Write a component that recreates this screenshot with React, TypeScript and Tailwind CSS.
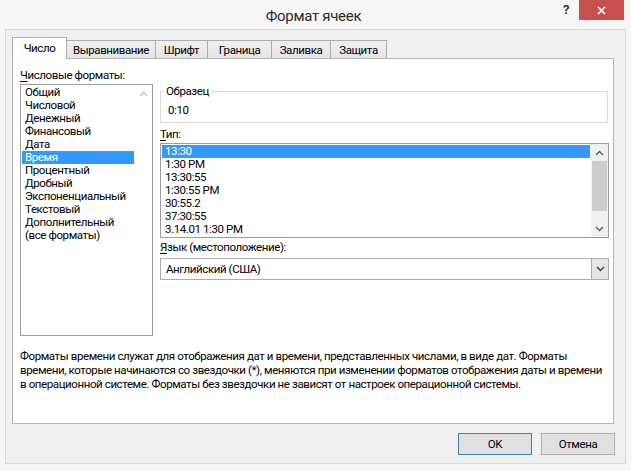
const categories = [
  'Общий',
  'Числовой',
  'Денежный',
  'Финансовый',
  'Дата',
  'Время',
  'Процентный',
  'Дробный',
  'Экспоненциальный',
  'Текстовый',
  'Дополнительный',
  '(все форматы)',
];

const types = ['13:30', '1:30 PM', '13:30:55', '1:30:55 PM', '30:55.2', '37:30:55', '3.14.01 1:30 PM'];

const tabs = [
  { label: 'Выравнивание', w: 'w-[90px]' },
  { label: 'Шрифт', w: 'w-[53px]' },
  { label: 'Граница', w: 'w-[65px]' },
  { label: 'Заливка', w: 'w-[60px]' },
  { label: 'Защита', w: 'w-[57px]' },
];

function Chevron({ up, className }: { up?: boolean; className?: string }) {
  return (
    <svg width="9" height="6" viewBox="0 0 9 6" className={className}>
      <path
        d={up ? 'M1 5 L4.5 1.5 L8 5' : 'M1 1 L4.5 4.5 L8 1'}
        fill="none"
        stroke="currentColor"
        strokeWidth="1.5"
      />
    </svg>
  );
}

export default function App() {
  return (
    <div className="w-[631px] h-[471px] overflow-hidden bg-[#f6f6f6] font-['Roboto',sans-serif] text-[11.5px] tracking-[-0.4px] leading-[14px] text-black flex flex-col">
      {/* title bar */}
      <div className="relative h-[29px] flex items-center justify-center">
        <span className="text-[15px] tracking-[-0.3px] leading-[18px] text-[#2b2b2b] pt-[2px] pr-[4px]">Формат ячеек</span>
        <span className="absolute left-[563px] top-[3px] text-[13px] font-bold text-[#333]">?</span>
        <div className="absolute left-[579px] top-0 w-[45px] h-[20px] bg-[#c75050] flex items-center justify-center">
          <svg width="9" height="9" viewBox="0 0 9 9">
            <path d="M1 1 L8 8 M8 1 L1 8" stroke="white" strokeWidth="1.7" />
          </svg>
        </div>
      </div>

      {/* client area */}
      <div className="mx-[5px] h-[435px] border border-[#d9d9d9] bg-[#f0f0f0] px-[6px] pt-[7px] flex flex-col">
        {/* tabs */}
        <div className="flex items-end h-[21px]">
          <div className="relative z-10 w-[55px] h-[22px] -mb-px bg-white border border-b-0 border-[#acacac] flex items-center justify-center pb-[2px]">
            Число
          </div>
          {tabs.map((t) => (
            <div
              key={t.label}
              className={`${t.w} h-[18px] -ml-px bg-gradient-to-b from-[#f0f0f0] to-[#e5e5e5] border border-b-0 border-[#acacac] flex items-center justify-center`}
            >
              {t.label}
            </div>
          ))}
        </div>

        {/* panel */}
        <div className="w-[602px] h-[366px] border border-[#b4b4b4] bg-white pl-[7px] pt-[9px] flex flex-col">
          <div className="flex gap-[7px]">
            {/* left column */}
            <div className="w-[133px] flex flex-col">
              <div>
                <span className="underline underline-offset-2">Ч</span>исловые форматы:
              </div>
              <div className="mt-[2px] h-[252px] border border-[#9c9c9c] flex">
                <div className="flex-1 p-[1px]">
                  {categories.map((c) => (
                    <div
                      key={c}
                      className={`h-[13px] leading-[13px] pl-[3px] whitespace-nowrap ${
                        c === 'Время' ? 'bg-[#3399ff] text-white' : ''
                      }`}
                    >
                      {c}
                    </div>
                  ))}
                </div>
                <div className="w-[17px] flex flex-col items-center pt-[6px] text-[#c4c4c4]">
                  <Chevron up />
                </div>
              </div>
            </div>

            {/* right column */}
            <div className="w-[449px] flex flex-col">
              <div className="relative mt-[23px] w-[448px] h-[32px] border border-[#dcdcdc] pl-[7px] pt-[11px]">
                <span className="absolute -top-[8px] left-[3px] bg-white px-[2px]">Образец</span>
                0:10
              </div>
              <div className="mt-[4px]">
                <span className="underline underline-offset-2">Т</span>ип:
              </div>
              <div className="mt-[2px] h-[95px] border border-[#9c9c9c] flex">
                <div className="flex-1 p-[1px]">
                  {types.map((t, i) => (
                    <div
                      key={t}
                      className={`h-[13px] leading-[13px] pl-[3px] whitespace-nowrap ${
                        i === 0 ? 'bg-[#3399ff] text-white' : ''
                      }`}
                    >
                      {t}
                    </div>
                  ))}
                </div>
                <div className="w-[17px] bg-[#f0f0f0] flex flex-col items-center text-[#606060]">
                  <div className="h-[17px] flex items-center justify-center">
                    <Chevron up />
                  </div>
                  <div className="w-[15px] h-[50px] bg-[#cdcdcd]" />
                  <div className="flex-1" />
                  <div className="h-[17px] flex items-center justify-center">
                    <Chevron />
                  </div>
                </div>
              </div>
              <div className="mt-[2px]">
                <span className="underline underline-offset-2">Я</span>зык (местоположение):
              </div>
              <div className="mt-[4px] h-[22px] border border-[#acacac] flex items-center">
                <div className="flex-1 pl-[5px]">Английский (США)</div>
                <div className="w-[17px] h-[20px] bg-[#e5e5e5] border-l border-[#acacac] flex items-center justify-center text-[#444]">
                  <Chevron />
                </div>
              </div>
            </div>
          </div>

          <div className="mt-[13px] whitespace-nowrap">
            <div>Форматы времени служат для отображения дат и времени, представленных числами, в виде дат. Форматы</div>
            <div>времени, которые начинаются со звездочки (*), меняются при изменении форматов отображения даты и времени</div>
            <div>в операционной системе. Форматы без звездочки не зависят от настроек операционной системы.</div>
          </div>
        </div>

        {/* buttons */}
        <div className="mt-[9px] flex justify-end gap-[9px] pr-[4px]">
          <button className="w-[74px] h-[22px] bg-[#e1e1e1] border border-[#3c7fb1]">OK</button>
          <button className="w-[74px] h-[22px] bg-[#e1e1e1] border border-[#acacac]">Отмена</button>
        </div>
      </div>
    </div>
  );
}
